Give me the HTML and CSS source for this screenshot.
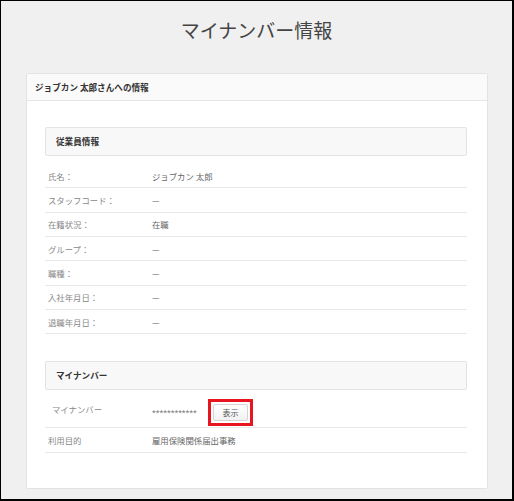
FILE: index.html
```
<!DOCTYPE html>
<html lang="ja">
<head>
    <meta charset="UTF-8">
    <title>マイナンバー情報</title>
    <link rel="stylesheet" href="styles.css">
</head>
<body>
    <div class="frame">
        <h1 class="title">マイナンバー情報</h1>
        <div class="card">
            <div class="card-header">ジョブカン 太郎さんへの情報</div>
            <div class="card-body">
                <div class="section-title">従業員情報</div>
                <div class="rows">
                    <div class="row"><span class="label">氏名：</span><span class="value">ジョブカン 太郎</span></div>
                    <div class="row"><span class="label">スタッフコード：</span><span class="value">—</span></div>
                    <div class="row"><span class="label">在籍状況：</span><span class="value">在職</span></div>
                    <div class="row"><span class="label">グループ：</span><span class="value">—</span></div>
                    <div class="row"><span class="label">職種：</span><span class="value">—</span></div>
                    <div class="row"><span class="label">入社年月日：</span><span class="value">—</span></div>
                    <div class="row"><span class="label">退職年月日：</span><span class="value">—</span></div>
                </div>

                <div class="section-title section-gap">マイナンバー</div>
                <div class="rows">
                    <div class="row row-tall">
                        <span class="label label-top">マイナンバー</span>
                        <span class="value">
                            <span class="masked">************</span>
                            <span class="highlight"><button type="button" class="btn">表示</button></span>
                        </span>
                    </div>
                    <div class="row"><span class="label">利用目的</span><span class="value">雇用保険関係届出事務</span></div>
                </div>
            </div>
        </div>
    </div>
</body>
</html>
```

FILE: styles.css
```
body {
    margin: 0;
    font-family: "Noto Sans CJK JP", "Noto Sans", sans-serif;
}
.frame {
    box-sizing: border-box;
    width: 514px;
    height: 501px;
    background-color: #f0f0f0;
    border-style: solid;
    border-color: #000;
    border-width: 1px 2px 2px 1px;
    overflow: hidden;
}
.title {
    margin: 0 0 31px;
    padding-top: 17px;
    text-align: center;
    font-size: 19px;
    line-height: 24px;
    font-weight: normal;
    color: #444;
}
.card {
    margin: 0 24px 0 25px;
    background-color: #fff;
    border: 1px solid #e3e3e3;
    border-radius: 2px;
}
.card-header {
    height: 26px;
    line-height: 26px;
    padding-left: 8px;
    background-color: #fafafa;
    border-bottom: 1px solid #e6e6e6;
    font-size: 8.6px;
    font-weight: bold;
    color: #333;
}
.card-body {
    padding: 26px 20px 35px 18px;
}
.section-title {
    box-sizing: border-box;
    height: 29px;
    line-height: 27px;
    padding-left: 10px;
    background-color: #f8f8f8;
    border: 1px solid #e3e3e3;
    border-radius: 2px;
    font-size: 8.6px;
    font-weight: bold;
    color: #333;
}
.section-gap {
    margin-top: 27px;
}
.rows {
    margin-top: 8px;
}
.row {
    box-sizing: border-box;
    display: flex;
    align-items: center;
    height: 24.33px;
    border-bottom: 1px solid #e8e8e8;
    font-size: 8.4px;
}
.row-tall {
    height: 30px;
}
.label {
    width: 104px;
    padding-left: 3px;
    color: #888;
}
.label-top {
    align-self: flex-start;
    padding-top: 5px;
    padding-left: 7px;
    width: 100px;
    line-height: 12px;
}
.value {
    display: flex;
    align-items: center;
    color: #666;
}
.masked {
    font-family: "Liberation Sans", sans-serif;
    font-size: 9.6px;
    color: #777;
    width: 45px;
    overflow: hidden;
    white-space: nowrap;
}
.highlight {
    margin-left: 11px;
    padding: 2px;
    border: 3px solid #e8141e;
    display: flex;
}
.btn {
    box-sizing: border-box;
    width: 35px;
    height: 17px;
    padding: 0;
    border: 1px solid #d4d4d4;
    border-radius: 2px;
    background: linear-gradient(#fff, #f2f2f2);
    font-family: "Noto Sans CJK JP", sans-serif;
    font-size: 8px;
    color: #555;
}
```
